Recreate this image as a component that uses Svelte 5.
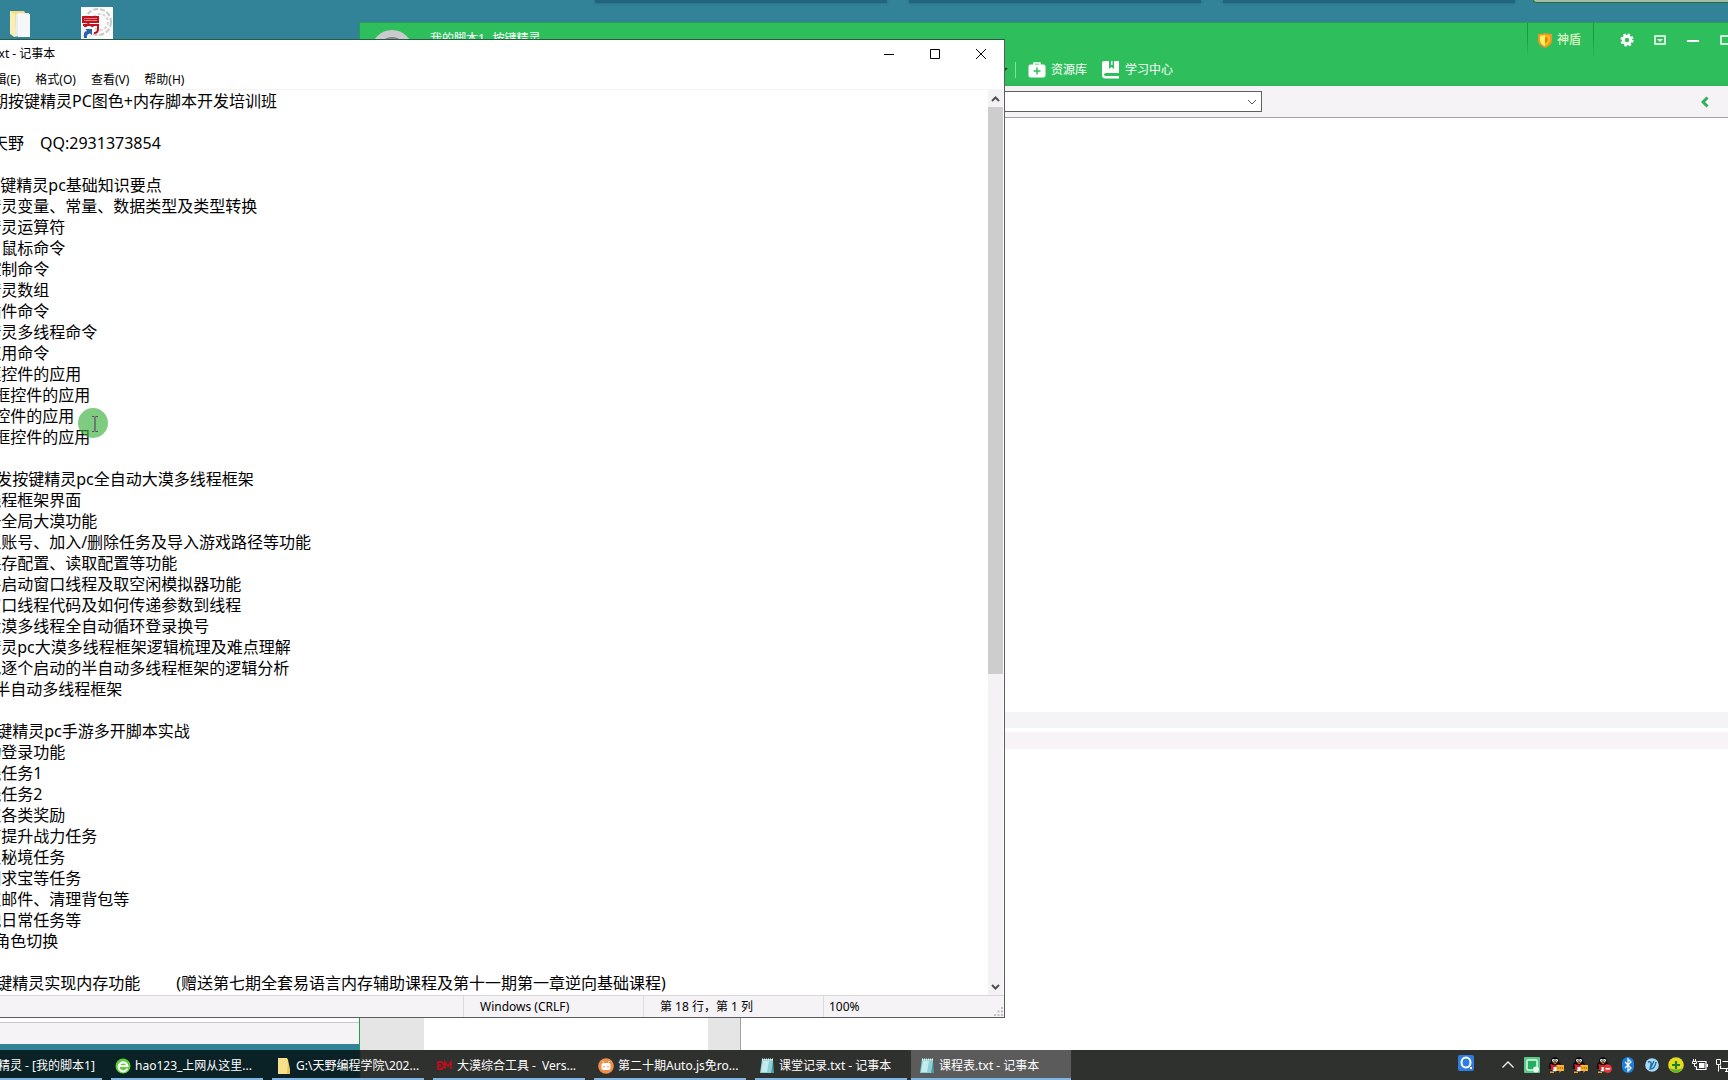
<script>
  const notes = [
    '第二十一期按键精灵PC图色+内存脚本开发培训班',
    '',
    '讲师名：天野\u3000QQ:2931373854',
    '',
    '第一章  按键精灵pc基础知识要点',
    '1、按键精灵变量、常量、数据类型及类型转换',
    '2、按键精灵运算符',
    '3、键盘、鼠标命令',
    '4、流程控制命令',
    '5、按键精灵数组',
    '6、常用插件命令',
    '7、按键精灵多线程命令',
    '8、其他应用命令',
    '9、输入框控件的应用',
    '10、下拉框控件的应用',
    '11、按钮控件的应用',
    '12、复选框控件的应用',
    '',
    '第二章 开发按键精灵pc全自动大漠多线程框架',
    '1、设计线程框架界面',
    '2、免注册全局大漠功能',
    '3、可导入账号、加入/删除任务及导入游戏路径等功能',
    '4、界面保存配置、读取配置等功能',
    '5、多开并启动窗口线程及取空闲模拟器功能',
    '6、编写窗口线程代码及如何传递参数到线程',
    '7、实现大漠多线程全自动循环登录换号',
    '8、按键精灵pc大漠多线程框架逻辑梳理及难点理解',
    '9、再实现逐个启动的半自动多线程框架的逻辑分析',
    '10、编写半自动多线程框架',
    '',
    '第三章 按键精灵pc手游多开脚本实战',
    '1、全自动登录功能',
    '2、跑主线任务1',
    '3、跑主线任务2',
    '4、可领取各类奖励',
    '5、每日可提升战力任务',
    '6、副本及秘境任务',
    '7、藏宝图求宝等任务',
    '8、自收取邮件、清理背包等',
    '9、做其他日常任务等',
    '10、自动角色切换',
    '',
    '第四章 按键精灵实现内存功能\u3000\u3000 (赠送第七期全套易语言内存辅助课程及第十一期第一章逆向基础课程)',
  ].join('\n');

  const menus = ['文件(F)', '编辑(E)', '格式(O)', '查看(V)', '帮助(H)'];

  const tasks = [
    { icon: 'script', label: '按键精灵 - [我的脚本1]' },
    { icon: 'browser', label: 'hao123_上网从这里...' },
    { icon: 'folder', label: 'G:\\天野编程学院\\202...' },
    { icon: 'dm', label: '大漠综合工具 -\u2002Vers...' },
    { icon: 'auto', label: '第二十期Auto.js免ro...' },
    { icon: 'note', label: '课堂记录.txt - 记事本' },
    { icon: 'note', label: '课程表.txt - 记事本', active: true },
  ];
</script>

{#snippet penguin(badge)}
  <svg viewBox="0 0 16 16" width="16" height="16">
    <path d="M7 0q4 0 4 4.500Q14 8 13 12l-2-1-1 4H4l-1-4-2 1Q0 8 3 4.500 3 0 7 0z" fill="#0c0c0c" />
    <path d="M4 10h6v3q-3 3-6 0z" fill="#f8f8f8" />
    <path d="M2.500 7q4.500 2 9 0v2q-4.500 2-9 0z" fill="#d8202c" />
    <path d="M3 9h2.500v4H3z" fill="#d8202c" />
    <circle cx="5.500" cy="3.500" r="1.400" fill="#fff" />
    <circle cx="8.500" cy="3.500" r="1.400" fill="#fff" />
    <path d="M5.500 3h.8v1.200h-.8zM7.700 3h.8v1.200h-.8z" fill="#000" />
    <path d="M4.500 5.500h5L7 7z" fill="#f4a020" />
    <path d="M2 14.500h4V16H2z" fill="#f4a020" />
    {#if badge === 'chat'}
      <path d="M8.500 8H16v6h-3l-1.500 2v-2h-3z" fill="#f6b42c" />
      <path d="M9.500 11h1.200M11.700 11h1.200M13.900 11h1.200" stroke="#6b3a00" stroke-width="1.200" />
    {:else}
      <circle cx="11.800" cy="11.800" r="4.200" fill="#e23a3c" />
      <path d="M9.500 11.800h4.600" stroke="#fff" stroke-width="1.500" />
    {/if}
  </svg>
{/snippet}

<div class="screen">
  <main class="desktop">
    <div class="shades"><i></i><i></i><i></i><b></b></div>

    <div class="shortcuts">
      <svg viewBox="0 0 22 28" width="22" height="28">
        <path d="M1 1h14l2 3v21l-12 2-4-3z" fill="#f3dd83" />
        <path d="M7 4l13-1v24l-14-1z" fill="#e9edf2" />
        <path d="M9 3l12 1v23H9z" fill="#f6f7f9" />
        <path d="M1 1l5 3v23l-5-4z" fill="#fbeeb2" />
      </svg>
      <svg viewBox="0 0 32 32" width="32" height="32">
        <path d="M0 0h32v32H0z" fill="#fbfbfb" />
        <circle cx="17" cy="15" r="13" fill="none" stroke="#c8c8c8" stroke-width="2" stroke-dasharray="5 2" />
        <circle cx="19" cy="15" r="8" fill="none" stroke="#d4d4d4" stroke-width="2" stroke-dasharray="3 2" />
        <path d="M2 10h15v5H2zM3 12.500h13M2 18h15v4q0 4-4 4M8 16l-6 6M12 19l-5 5" fill="none" stroke="#c4121c" stroke-width="2" />
        <path d="M1 20h11v12H1z" fill="#eef3f8" />
        <path d="M3 31q-1-7 3-7l-1.500-2H11v6l-2-1.500Q5 27 6 31z" fill="#2c62a4" />
      </svg>
    </div>

    <section class="lower-window"><div></div></section>

    <section class="script-window">
      <header>
        <div class="caption">
          <span class="avatar"></span>
          <span class="name">我的脚本1--按键精灵</span>
          <button class="guard">
            <svg viewBox="0 0 14 15" width="14" height="15">
              <path d="M7 0q3 1 7 1v6q0 5.500-7 8Q0 12.500 0 7V1q4 0 7-1z" fill="#e8982c" />
              <path d="M7 2q2 .8 5 .8V7q0 4-5 6z" fill="#ffb914" />
              <path d="M7 2q-2 .8-5 .8V7q0 4 5 6z" fill="#fff25a" />
              <path d="M7 4l2.500.6V8L7 10.500z" fill="#d98512" />
            </svg>
            神盾
          </button>
          <button class="ctl" aria-label="设置">
            <svg viewBox="0 0 14 14" width="14" height="14">
              <circle cx="7" cy="7" r="3.700" fill="none" stroke="#fff" stroke-width="3" />
              <circle cx="7" cy="7" r="5.600" fill="none" stroke="#fff" stroke-width="2" stroke-dasharray="2.400 2" />
            </svg>
          </button>
          <button class="ctl" aria-label="菜单">
            <svg viewBox="0 0 12 10" width="12" height="10">
              <path d="M1 1h10v8H1z" fill="none" stroke="#fff" stroke-width="1.500" />
              <path d="M3 4h6L6 7z" fill="#fff" />
            </svg>
          </button>
          <button class="ctl" aria-label="最小化">
            <svg viewBox="0 0 12 10" width="12" height="10"><path d="M0 6h12" stroke="#fff" stroke-width="2" /></svg>
          </button>
          <button class="ctl" aria-label="最大化">
            <svg viewBox="0 0 12 10" width="12" height="10"><path d="M1 1h10v8H1z" fill="none" stroke="#fff" stroke-width="1.500" /></svg>
          </button>
        </div>
        <nav>
          <svg class="tip" viewBox="0 0 6 4" width="6" height="4"><path d="M0 0h6L3 3z" fill="#124a22" /></svg>
          <span class="rule"></span>
          <button>
            <svg viewBox="0 0 18 18" width="18" height="18">
              <path d="M6 4V2h6v2" fill="none" stroke="#fff" stroke-width="1.500" />
              <rect x="0.500" y="3.500" width="17" height="13" rx="2" fill="#fff" />
              <path d="M9 6.500v7M5.500 10h7" stroke="#2ebf5c" stroke-width="1.500" />
            </svg>
            资源库
          </button>
          <button>
            <svg viewBox="0 0 18 18" width="18" height="18">
              <path d="M2 0h5v8l2.500-2L12 8V0h5v12H4q-2 0-2 1.500T4 15h13v2.500H3.500Q0 17.500 0 14V2q0-2 2-2z" fill="#fff" />
              <path d="M9 0h1.500v4H9z" fill="#fff" />
            </svg>
            学习中心
          </button>
        </nav>
      </header>
      <div class="toolbar">
        <select aria-label="脚本"><option></option></select>
        <button class="back" aria-label="收起">
          <svg viewBox="0 0 8 12" width="8" height="12"><path d="M6.500 1.500L2 6l4.500 4.500" fill="none" stroke="#2fae5c" stroke-width="3" /></svg>
        </button>
      </div>
      <div class="code"></div>
      <div class="band"></div>
      <div class="band warm"></div>
      <div class="output"><span class="gutter"></span><span class="pane"></span><span class="edge"></span></div>
    </section>

    <section class="notepad">
      <div class="title">
        <svg viewBox="0 0 16 16" width="16" height="16"><path d="M3 2h11l-2 13H1z" fill="#8fd0d8" /></svg>
        <span>课程表.txt - 记事本</span>
        <button aria-label="最小化"><svg viewBox="0 0 10 10" width="10" height="10"><path d="M0 5.500h10" stroke="#000" /></svg></button>
        <button aria-label="最大化"><svg viewBox="0 0 10 10" width="10" height="10"><path d="M.5.5h9v9h-9z" fill="none" stroke="#000" /></svg></button>
        <button aria-label="关闭"><svg viewBox="0 0 10 10" width="10" height="10"><path d="M0 0l10 10M10 0L0 10" stroke="#000" /></svg></button>
      </div>
      <div class="menu">
        {#each menus as item}<button>{item}</button>{/each}
      </div>
      <div class="editor">
        <textarea aria-label="文本" spellcheck="false" value={notes}></textarea>
        <div class="scroll">
          <svg viewBox="0 0 15 17" width="15" height="17"><path d="M4 11l3.500-3.500L11 11" fill="none" stroke="#505050" stroke-width="2" /></svg>
          <span class="thumb"></span>
          <span class="track"></span>
          <svg viewBox="0 0 15 16" width="15" height="16"><path d="M4 6l3.500 3.500L11 6" fill="none" stroke="#505050" stroke-width="2" /></svg>
        </div>
      </div>
      <footer>
        <span class="crlf">Windows (CRLF)</span>
        <span class="pos">第 18 行，第 1 列</span>
        <span class="zoom">100%</span>
        <svg viewBox="0 0 10 10" width="10" height="10">
          <path d="M7 0h2v2H7zM7 3.500h2v2H7zM7 7h2v2H7zM3.500 3.500h2v2h-2zM3.500 7h2v2h-2zM0 7h2v2H0z" fill="#bfbfbf" />
        </svg>
      </footer>
    </section>

    <svg class="pointer" viewBox="0 0 30 30" width="30" height="30">
      <circle cx="15" cy="15" r="15" fill="#3cb03c" fill-opacity=".66" />
      <path d="M14 8.500h2.500M17.500 8.500H20M17 9v14M14 23.500h2.500M17.500 23.500H20" stroke="#5c4a66" stroke-width="1.200" />
    </svg>
  </main>

  <footer class="taskbar">
    {#each tasks as task}
      <button class="task" class:active={task.active}>
        <svg viewBox="0 0 16 16" width="16" height="16">
          {#if task.icon === 'browser'}
            <circle cx="8" cy="8" r="7.500" fill="#5fce3c" />
            <path d="M12.300 10.500A4.500 4.500 0 1 1 12.500 8H4" fill="none" stroke="#fff" stroke-width="2" />
          {:else if task.icon === 'folder'}
            <path d="M2 0h9l1 2v12l1 1v1H2z" fill="#f8e08a" />
            <path d="M12 2l2 9v5h-3z" fill="#e9c65c" />
          {:else if task.icon === 'dm'}
            <path d="M1 4h4l2 3-2 4H1zM3 6v3M8 11V4l3 4 3-4v7" fill="none" stroke="#b8101c" stroke-width="1.800" />
          {:else if task.icon === 'auto'}
            <circle cx="8" cy="8" r="7.800" fill="#f09048" />
            <rect x="3.500" y="5" width="9" height="7" rx="2" fill="#fff" />
            <path d="M5.500 4.500L4.500 3M10.500 4.500l1-1.500" stroke="#fff" />
            <path d="M6 8v1.500M10 8v1.500" stroke="#f09048" stroke-width="1.300" />
          {:else if task.icon === 'note'}
            <path d="M3 1h11v14H1z" fill="#8ccfd4" />
            <path d="M4 3h6L8 14H2z" fill="#c3ecec" />
            <path d="M3 1.500h11" stroke="#e9f5f5" stroke-dasharray="1 1" stroke-width="2" />
            <path d="M14 3l1 12h-3z" fill="#4b9da8" />
          {:else}
            <circle cx="8" cy="8" r="7" fill="#2ebf5c" />
          {/if}
        </svg>
        <span>{task.label}</span>
      </button>
    {/each}

    <div class="tray">
      <svg class="q" viewBox="0 0 16 16" width="16" height="16">
        <rect width="16" height="16" rx="2" fill="#2f7de0" />
        <ellipse cx="8" cy="7.500" rx="4.500" ry="5" fill="none" stroke="#fff" stroke-width="2" />
        <path d="M12 12h2v2h-2z" fill="#fff" />
      </svg>
      <svg class="more" viewBox="0 0 12 12" width="12" height="12"><path d="M.5 8.500L6 3l5.500 5.500" fill="none" stroke="#f0f0f0" stroke-width="1.300" /></svg>
      <svg viewBox="0 0 16 16" width="16" height="16">
        <rect width="16" height="16" rx="1" fill="#58c98a" />
        <rect x="3" y="3" width="10" height="10" rx="1" fill="#22b060" stroke="#e4f7ea" stroke-width="1.500" />
        <circle cx="12" cy="12.500" r="3" fill="#e4f7ea" />
      </svg>
      {@render penguin('chat')}
      {@render penguin('chat')}
      {@render penguin('busy')}
      <svg viewBox="0 0 16 16" width="16" height="16">
        <rect x="2" y="0" width="12" height="16" rx="6" fill="#1a7fe0" />
        <path d="M5 5l6 6-3 3V2l3 3-6 6" fill="none" stroke="#fff" stroke-width="1.200" />
      </svg>
      <svg viewBox="0 0 16 16" width="16" height="16">
        <circle cx="8" cy="8" r="6.800" fill="#a8daf4" />
        <path d="M4 5q4-1 3 3t-1 4q5 0 6-7M10 4L6 12" fill="none" stroke="#1d6fa8" stroke-width="1.500" />
      </svg>
      <svg viewBox="0 0 16 16" width="16" height="16">
        <circle cx="8" cy="8" r="7.800" fill="#e4dc1e" />
        <path d="M1 11q7 9 14 0-7 3-14 0z" fill="#5fb52a" />
        <path d="M8 4v8M4 8h8" stroke="#1f7d28" stroke-width="2.200" />
      </svg>
      <svg viewBox="0 0 16 16" width="16" height="16">
        <path d="M5.500 4.500h8.500v8H4.500v-3" fill="none" stroke="#fff" stroke-width="1.200" />
        <path d="M7 6h5.500v5H7zM14.500 7H16v3h-1.500z" fill="#fff" />
        <path d="M1.500 2v2M3.500 2v2M.5 4.500h4v2h-4zM2.500 6v3.500h2" fill="none" stroke="#fff" />
      </svg>
      <svg viewBox="0 0 16 16" width="16" height="16">
        <path d="M6.500 4.500H16v7H4.500v-3M9 14.500h7M10.500 12v2" fill="none" stroke="#fff" stroke-width="1.200" />
        <path d="M.5 2.500h4v5h-4zM2.500 7.500v7" fill="none" stroke="#fff" />
      </svg>
    </div>
  </footer>
</div>

<style>
  :global(body) { margin: 0; overflow: hidden; }
  .screen {
    display: flex;
    flex-direction: column;
    height: 100vh;
    overflow: hidden;
    font: 12px/16px "Noto Sans", "Noto Sans CJK SC", sans-serif;
    color: #000;
  }
  button {
    display: flex;
    align-items: center;
    border: 0;
    padding: 0;
    background: none;
    font: inherit;
    color: inherit;
    white-space: nowrap;
  }
  svg { display: block; flex: none; }

  .desktop { position: relative; flex: 1; overflow: hidden; background: #328298; }
  .shades { display: flex; gap: 22px; height: 3px; padding-left: 595px; }
  .shades i { flex: none; width: 292px; background: #22647c; box-shadow: 0 0 3px #22647c; }
  .shades b {
    flex: 1;
    margin-left: -4px;
    border: 1px solid #2c6c3c;
    border-width: 0 0 1px 1px;
    border-radius: 0 0 0 6px;
    background: #a9bba6;
  }
  .shortcuts { display: flex; align-items: flex-start; gap: 50px; padding: 4px 9px; }
  .shortcuts svg:first-child { margin-top: 3px; }

  .lower-window {
    position: absolute;
    left: 0;
    bottom: 6px;
    width: 359px;
    height: 60px;
    display: flex;
    flex-direction: column;
    justify-content: flex-end;
    background: #fff;
  }
  .lower-window div { height: 21px; border-top: 1px solid #c8c6ca; background: #f6f3f6; }

  .script-window {
    position: absolute;
    inset: 22px -60px 0 359px;
    display: flex;
    flex-direction: column;
    border-left: 1px solid #1fa04a;
    background: #fff;
  }
  header {
    box-sizing: border-box;
    height: 64px;
    border-top: 1px solid #2b9b57;
    background: linear-gradient(#2ebf5c 90%, #2eb559);
    color: #fff;
  }
  .caption { display: flex; height: 34px; padding-right: 46px; }
  .avatar {
    box-sizing: border-box;
    flex: none;
    width: 42px;
    height: 42px;
    margin: 7px 17px 0 11px;
    border: 7px solid #c9cacc;
    border-radius: 50%;
    background: #85858a;
  }
  .name { flex: 1; padding-top: 8px; }
  .guard {
    gap: 5px;
    padding: 0 12px 0 10px;
    border: 1px solid;
    border-width: 0 1px;
    border-image: linear-gradient(#1d9446 40%, #2ebf5c) 1;
    color: #f4ffd8;
  }
  .ctl { width: 33px; justify-content: center; }
  .guard + .ctl { margin-left: 16px; }
  nav { display: flex; align-items: center; height: 26px; padding-left: 642px; }
  .rule { width: 1px; height: 16px; margin: 0 12px 0 7px; background: #7fe09a; }
  nav button { gap: 5px; margin-right: 15px; }
  .toolbar {
    display: flex;
    align-items: center;
    justify-content: space-between;
    box-sizing: border-box;
    height: 32px;
    padding-right: 79px;
    border-bottom: 1px solid #a2a0a3;
    background: #f6f3f6;
  }
  select {
    appearance: none;
    box-sizing: border-box;
    width: 902px;
    height: 21px;
    border: 1px solid #606060;
    border-radius: 0;
    background: #fff url("data:image/svg+xml,%3Csvg xmlns='http://www.w3.org/2000/svg' width='10' height='6'%3E%3Cpath d='M1 1l4 4 4-4' fill='none' stroke='%23555'/%3E%3C/svg%3E") no-repeat right 4px center;
  }
  .code { flex: 594; }
  .band { height: 16px; margin-bottom: 4px; background: #f4f3f6; }
  .band.warm { height: 17px; margin: 0; background: #f7f3f6; }
  .output { flex: 301; display: flex; }
  .gutter { width: 64px; background: #e5e5e5; }
  .pane { width: 284px; }
  .edge { width: 32px; border-right: 1px solid #a0a0a0; background: #e5e5e5; }

  .notepad {
    position: absolute;
    inset: 39px auto 32px -78px;
    box-sizing: border-box;
    width: 1083px;
    display: flex;
    flex-direction: column;
    border: 1px solid #5c5c5c;
    border-top-color: #2b5a44;
    background: #fff;
  }
  .title { display: flex; align-items: center; height: 28px; padding-left: 12px; }
  .title span { flex: 1; padding-left: 4px; }
  .title button { width: 46px; height: 28px; justify-content: center; }
  .menu { display: flex; height: 21px; border-bottom: 1px solid #f4f4f4; }
  .menu button { padding: 3px 8px 0 7px; }
  .editor { flex: 1; display: flex; min-height: 0; }
  textarea {
    flex: 1;
    box-sizing: border-box;
    border: 0;
    margin: 0;
    padding: 1px 0 0 5px;
    outline: 0;
    resize: none;
    overflow: hidden;
    background: #fff;
    color: #000;
    font: 16px/21px "Noto Sans", "Noto Sans CJK SC", sans-serif;
    white-space: pre;
  }
  .scroll { display: flex; flex-direction: column; width: 15px; margin-right: 1px; background: #f5f2f6; }
  .thumb { flex: 567; background: #cdcdcd; }
  .track { flex: 305; }
  .notepad footer {
    display: flex;
    box-sizing: border-box;
    height: 22px;
    border-top: 1px solid #d8d6d9;
    background: #f6f3f6;
    line-height: 21px;
  }
  .notepad footer span { box-sizing: border-box; border-left: 1px solid #dcdadd; padding-left: 16px; }
  .notepad footer .crlf { width: 180px; margin-left: 540px; }
  .notepad footer .pos { width: 180px; }
  .notepad footer .zoom { flex: 1; padding-left: 5px; }
  .notepad footer svg { align-self: flex-end; }

  .pointer { position: absolute; left: 78px; top: 408px; }

  .taskbar {
    display: flex;
    flex: none;
    box-sizing: border-box;
    height: 30px;
    gap: 9px;
    margin-left: -50px;
    background: linear-gradient(90deg, #0a2126 409px, #2f312f 411px);
    color: #fff;
  }
  .task {
    box-sizing: border-box;
    flex: none;
    width: 152px;
    gap: 4px;
    padding: 4px 0 0 4px;
    border-bottom: 2px solid #82b6e2;
    overflow: hidden;
  }
  .task.active { width: 160px; margin-left: -5px; padding-left: 8px; background: #5a5b5a; }
  .tray { display: flex; align-items: center; gap: 8px; margin-left: auto; margin-right: -4px; }
  .q { margin-bottom: 4px; }
  .more { margin: 0 2px 0 20px; }
</style>
